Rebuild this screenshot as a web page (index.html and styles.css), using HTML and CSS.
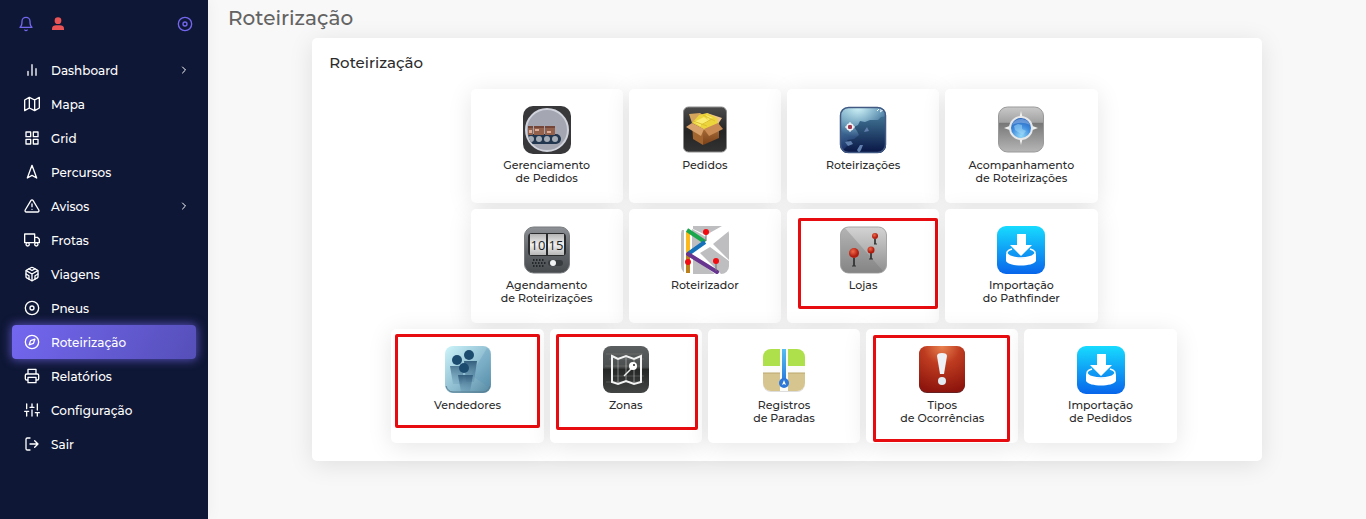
FILE: index.html
```
<!DOCTYPE html>
<html lang="pt-BR">
<head>
    <meta charset="UTF-8">
    <meta name="viewport" content="width=device-width, initial-scale=1.0">
    <title>Roteirização</title>
    <link rel="stylesheet" href="styles.css">
</head>
<body>

    <!-- Sidebar -->
    <aside class="sidebar">
        <div class="sidebar-top">
            <button type="button" class="icon-btn" aria-label="Notificações">
                <svg class="icon" viewBox="0 0 24 24"><path d="M18 8A6 6 0 0 0 6 8c0 7-3 9-3 9h18s-3-2-3-9"/><path d="M13.73 21a2 2 0 0 1-3.46 0"/></svg>
            </button>
            <button type="button" class="icon-btn user-btn" aria-label="Usuário">
                <svg viewBox="0 0 24 24" width="16" height="16"><circle cx="12" cy="7" r="5"/><path d="M3 21v-2c0-3.500 3-5 6-5h6c3 0 6 1.500 6 5v2z"/></svg>
            </button>
            <button type="button" class="icon-btn pin-btn" aria-label="Fixar menu">
                <svg class="icon" viewBox="0 0 24 24"><circle cx="12" cy="12" r="10"/><circle cx="12" cy="12" r="3"/></svg>
            </button>
        </div>

        <nav class="menu">
            <a href="#" class="menu-item">
                <svg class="icon" viewBox="0 0 24 24"><path d="M18 20V10M12 20V4M6 20v-6"/></svg>
                <span>Dashboard</span>
                <svg class="icon arrow" viewBox="0 0 24 24"><path d="M9 18l6-6-6-6"/></svg>
            </a>
            <a href="#" class="menu-item">
                <svg class="icon" viewBox="0 0 24 24"><path d="M1 6v16l7-4 8 4 7-4V2l-7 4-8-4-7 4zM8 2v16M16 6v16"/></svg>
                <span>Mapa</span>
            </a>
            <a href="#" class="menu-item">
                <svg class="icon" viewBox="0 0 24 24"><path d="M3 3h7v7H3zM14 3h7v7h-7zM14 14h7v7h-7zM3 14h7v7H3z"/></svg>
                <span>Grid</span>
            </a>
            <a href="#" class="menu-item">
                <svg class="icon" viewBox="0 0 24 24"><path d="M12 2l7 19-7-4-7 4z"/></svg>
                <span>Percursos</span>
            </a>
            <a href="#" class="menu-item">
                <svg class="icon" viewBox="0 0 24 24"><path d="M10.290 3.860L1.820 18a2 2 0 0 0 1.710 3h16.940a2 2 0 0 0 1.710-3L13.710 3.860a2 2 0 0 0-3.420 0zM12 9v4M12 17h.01"/></svg>
                <span>Avisos</span>
                <svg class="icon arrow" viewBox="0 0 24 24"><path d="M9 18l6-6-6-6"/></svg>
            </a>
            <a href="#" class="menu-item">
                <svg class="icon" viewBox="0 0 24 24"><path d="M1 3h15v13H1zM16 8h4l3 3v5h-7z"/><circle cx="5.500" cy="18.500" r="2.500"/><circle cx="18.500" cy="18.500" r="2.500"/></svg>
                <span>Frotas</span>
            </a>
            <a href="#" class="menu-item">
                <svg class="icon" viewBox="0 0 24 24"><path d="M21 16V8a2 2 0 0 0-1-1.730l-7-4a2 2 0 0 0-2 0l-7 4A2 2 0 0 0 3 8v8a2 2 0 0 0 1 1.730l7 4a2 2 0 0 0 2 0l7-4A2 2 0 0 0 21 16z"/><path d="M7.500 4.210L12 6.810l4.500-2.600M7.500 19.790V14.600L3 12M21 12l-4.500 2.600v5.190M3.270 6.960L12 12.010l8.730-5.050M12 22.080V12"/></svg>
                <span>Viagens</span>
            </a>
            <a href="#" class="menu-item">
                <svg class="icon" viewBox="0 0 24 24"><circle cx="12" cy="12" r="10"/><circle cx="12" cy="12" r="3"/></svg>
                <span>Pneus</span>
            </a>
            <a href="#" class="menu-item active">
                <svg class="icon" viewBox="0 0 24 24"><circle cx="12" cy="12" r="10"/><path d="M16.240 7.760l-2.120 6.360-6.360 2.120 2.120-6.360z"/></svg>
                <span>Roteirização</span>
            </a>
            <a href="#" class="menu-item">
                <svg class="icon" viewBox="0 0 24 24"><path d="M6 9V2h12v7M6 18H4a2 2 0 0 1-2-2v-5a2 2 0 0 1 2-2h16a2 2 0 0 1 2 2v5a2 2 0 0 1-2 2h-2M6 14h12v8H6z"/></svg>
                <span>Relatórios</span>
            </a>
            <a href="#" class="menu-item">
                <svg class="icon" viewBox="0 0 24 24"><path d="M4 21v-7M4 10V3M12 21v-9M12 8V3M20 21v-5M20 12V3M1 14h6M9 8h6M17 16h6"/></svg>
                <span>Configuração</span>
            </a>
            <a href="#" class="menu-item">
                <svg class="icon" viewBox="0 0 24 24"><path d="M9 21H5a2 2 0 0 1-2-2V5a2 2 0 0 1 2-2h4M16 17l5-5-5-5M21 12H9"/></svg>
                <span>Sair</span>
            </a>
        </nav>
    </aside>

    <!-- Content -->
    <main class="content">
        <h1>Roteirização</h1>

        <section class="card">
            <h2>Roteirização</h2>

            <div class="tile-row">
                <a href="#" class="tile">
                    <svg class="tile-icon" viewBox="0 0 48 48">
                        <defs><clipPath id="beltClip"><circle cx="24" cy="24" r="20"/></clipPath></defs>
                        <rect width="48" height="48" rx="10" fill="#38373a"/>
                        <circle cx="24" cy="24" r="21" fill="#a4a7b2" stroke="#d0d3dc" stroke-width="2"/>
                        <g clip-path="url(#beltClip)">
                            <path d="M5 28h28a5 5 0 0 1 0 10H7z" fill="#22364f"/>
                            <path d="M5 20h5v9H5zM11 20h10v9H11zM22 20h10v9H22z" fill="#93604b"/>
                            <path d="M11 20h10v2H11zM22 20h10v2H22zM5 20h5v2H5z" fill="#754638"/>
                            <path d="M12 23h4v2h-4zM24 25h4v2h-4zM6 24h3v3H6z" fill="#dcae9a"/>
                            <g fill="#a4abb5"><circle cx="8" cy="33" r="3"/><circle cx="16" cy="33" r="3"/><circle cx="24" cy="33" r="3"/><circle cx="32" cy="33" r="3"/></g>
                        </g>
                    </svg>
                    <span>Gerenciamento<br>de Pedidos</span>
                </a>
                <a href="#" class="tile">
                    <svg class="tile-icon" viewBox="0 0 48 48">
                        <defs>
                            <linearGradient id="boxBg" x2="0" y2="1"><stop stop-color="#4b4b4b"/><stop offset=".55" stop-color="#242424"/><stop offset="1" stop-color="#333"/></linearGradient>
                            <linearGradient id="boxSide" x2="0" y2="1"><stop stop-color="#b67a42"/><stop offset="1" stop-color="#7a4018"/></linearGradient>
                        </defs>
                        <rect x="2.500" y="1" width="43" height="45" rx="5" fill="url(#boxBg)" stroke="#8d8d8d"/>
                        <path d="M11 18l11 5v16l-10-6z" fill="#a2652f"/>
                        <path d="M22 23l16-6v15l-16 7z" fill="url(#boxSide)"/>
                        <path d="M8 8l11-1 6 4-14 6z" fill="#d6a55c"/>
                        <path d="M26 7l15 5-4 6-12-7z" fill="#efc38f"/>
                        <path d="M11 17l7-8 8-2 10 5 1 6-13 6z" fill="#ecd43c"/>
                        <path d="M13 16l10-5 5 4-9 5zM25 9l7 3-5 2z" fill="#f9ec70"/>
                        <path d="M12 15l14 5M22 9l12 6M20 19l11-6" stroke="#dcc12e" fill="none"/>
                        <path d="M11 17l12 6-3 7-15-9z" fill="#d8a06a"/>
                        <path d="M23 23l14-6 5 6-14 7z" fill="#c98a54"/>
                    </svg>
                    <span>Pedidos</span>
                </a>
                <a href="#" class="tile">
                    <svg class="tile-icon" viewBox="0 0 48 48">
                        <defs>
                            <linearGradient id="seaBg" x2=".3" y2="1"><stop stop-color="#82b1c8"/><stop offset=".4" stop-color="#4a7ca2"/><stop offset="1" stop-color="#101f5b"/></linearGradient>
                            <radialGradient id="seaGlow" cx=".4" cy="0" r=".65"><stop stop-color="#d6f7fc"/><stop offset="1" stop-color="#a3d6e4" stop-opacity="0"/></radialGradient>
                            <linearGradient id="seaDark" x2="0" y2="1"><stop stop-color="#3f7293"/><stop offset="1" stop-color="#071342"/></linearGradient>
                            <clipPath id="seaClip"><rect x="1" y="1" width="46" height="46" rx="8"/></clipPath>
                        </defs>
                        <g clip-path="url(#seaClip)">
                            <path d="M0 0h48v48H0z" fill="url(#seaBg)"/>
                            <path d="M0 0h48v48H0z" fill="url(#seaGlow)"/>
                            <path d="M48 10l-6 1-3 3-8 0-5 2-5-1-2 4-4 2 3 4 2 4-5 4-7 1 2 4-5 5-1 5h44z" fill="url(#seaDark)"/>
                            <path d="M26 24l2-3 2 4-5 1zM18 44l3-5 3 0-2 5-2 3zM6 36l6-1 2 3-5 2z" fill="#617fac"/>
                            <path d="M38 5l2-2M41 6l3-2M42 3v2" stroke="#f0fbff"/>
                        </g>
                        <rect x="1.500" y="1.500" width="45" height="45" rx="8" fill="none" stroke="#415983" stroke-width="1.500"/>
                        <circle cx="11" cy="21" r="3" fill="#9f3b51" stroke="#eef2f6" stroke-width="1.500"/>
                        <path d="M11 16v3M11 23v3M6 21h3M13 21h3" stroke="#fff"/>
                    </svg>
                    <span>Roteirizações</span>
                </a>
                <a href="#" class="tile">
                    <svg class="tile-icon" viewBox="0 0 48 48">
                        <defs>
                            <linearGradient id="grayBg" x2="0" y2="1"><stop stop-color="#c9c9c9"/><stop offset=".34" stop-color="#a2a2a2"/><stop offset=".36" stop-color="#777"/><stop offset="1" stop-color="#b6b6b6"/></linearGradient>
                            <radialGradient id="globe" cx=".5" cy=".85" r=".9"><stop stop-color="#91d8f8"/><stop offset=".5" stop-color="#3f8bdd"/><stop offset="1" stop-color="#2056ac"/></radialGradient>
                        </defs>
                        <rect x="1.500" y="1" width="45" height="45" rx="9" fill="url(#grayBg)" stroke="#999"/>
                        <path d="M24 5l3 12 14 5-14 5-3 12-3-12-14-5 14-5z" fill="#f1f1ef"/>
                        <circle cx="24" cy="22" r="11" fill="url(#globe)" stroke="#e7e8e9" stroke-width="2"/>
                        <path d="M17 20l4-2 4 1 0 4 4 2-3 4-5-3-3-2z" fill="#a5ddfa" opacity=".5"/>
                        <path d="M15 19c2-8 16-8 18 0-6-3-12-3-18 0z" fill="#b8d2f5" opacity=".4"/>
                    </svg>
                    <span>Acompanhamento<br>de Roteirizações</span>
                </a>
            </div>

            <div class="tile-row">
                <a href="#" class="tile">
                    <svg class="tile-icon" viewBox="0 0 48 48">
                        <defs>
                            <linearGradient id="clockBg" x2="0" y2="1"><stop stop-color="#8e9296"/><stop offset=".5" stop-color="#63676b"/><stop offset="1" stop-color="#484b4e"/></linearGradient>
                            <linearGradient id="flap" x2="0" y2="1"><stop stop-color="#b4b4b4"/><stop offset=".5" stop-color="#f0f0f0"/><stop offset="1" stop-color="#b8b8b8"/></linearGradient>
                        </defs>
                        <rect x="1.500" y="1" width="45" height="46" rx="9" fill="url(#clockBg)" stroke="#777b7e"/>
                        <rect x="5" y="7" width="38" height="23" rx="4" fill="#292b2d"/>
                        <path d="M7 8h16v21H7zM25 8h16v21H25z" fill="url(#flap)"/>
                        <g class="clock-digits"><text x="15" y="24">10</text><text x="33" y="24">15</text></g>
                        <path d="M10 34h12M9 37h14M10 40h12" stroke="#24272a" stroke-width="2" stroke-dasharray="1.500 1.500"/>
                        <rect x="25" y="34" width="15" height="6" rx="3" fill="#393c3f"/>
                        <circle cx="30" cy="37" r="3" fill="#f0f2f3"/>
                    </svg>
                    <span>Agendamento<br>de Roteirizações</span>
                </a>
                <a href="#" class="tile">
                    <svg class="tile-icon" viewBox="0 0 48 48">
                        <defs><clipPath id="routeClip"><rect width="48" height="48" rx="8"/></clipPath></defs>
                        <g clip-path="url(#routeClip)">
                            <path d="M0 4h3v44H0zM12 0h29L25 9 12 3zM48 5v29L32 18zM12 32l22 16H12zM29 21l19 14v13h-8L19 27z" fill="#bebec0"/>
                            <path d="M11 3l14 8v4L11 24z" fill="#bebec0"/>
                        </g>
                        <g fill="none" stroke-width="4" stroke-linejoin="round">
                            <path d="M7 6v22" stroke="#fbb91d"/>
                            <path d="M7 28v19" stroke="#b9801d"/>
                            <path d="M6 4l18 12" stroke="#1aa64b"/>
                            <path d="M24 16L7 28" stroke="#1370b9"/>
                            <path d="M7 28l29 18" stroke="#67358f" stroke-linecap="round"/>
                        </g>
                        <path d="M25 6v9M35 36v9" stroke="#776b73"/>
                        <g fill="#f30b12"><circle cx="25" cy="6" r="3"/><circle cx="7" cy="36" r="3"/><circle cx="35" cy="35" r="3"/></g>
                    </svg>
                    <span>Roteirizador</span>
                </a>
                <a href="#" class="tile">
                    <svg class="tile-icon" viewBox="0 0 48 48">
                        <defs>
                            <linearGradient id="stone" x2="0" y2="1"><stop stop-color="#d4d4d4"/><stop offset="1" stop-color="#8f8f8f"/></linearGradient>
                            <radialGradient id="pinRed" cx=".4" cy=".35"><stop stop-color="#f06a4a"/><stop offset="1" stop-color="#b01c0e"/></radialGradient>
                        </defs>
                        <rect x="1.500" y="1" width="46" height="46" rx="8" fill="url(#stone)" stroke="#a5a5a5"/>
                        <path d="M2 9a8 8 0 0 1 4-7l38 43q-3 2-6 2H10a8 8 0 0 1-8-8z" fill="#6d6d6d" opacity=".3"/>
                        <path d="M15 32v8M32 27v6M36 13v5" stroke="#222" stroke-width="1.500"/>
                        <path d="M13 40h4M30 33h4M35 18h3" stroke="#333"/>
                        <g fill="url(#pinRed)"><circle cx="15" cy="27" r="5"/><circle cx="32" cy="24" r="3.500"/><circle cx="36" cy="10" r="3"/></g>
                    </svg>
                    <span>Lojas</span>
                    <i class="mark mark-lojas"></i>
                </a>
                <a href="#" class="tile">
                    <svg class="tile-icon" viewBox="0 0 48 48">
                        <defs><linearGradient id="importBg" x2="0" y2="1"><stop stop-color="#17dbff"/><stop offset="1" stop-color="#0865eb"/></linearGradient></defs>
                        <rect width="48" height="48" rx="9" fill="url(#importBg)"/>
                        <path d="M20 8h9v11h6L24 30 13 19h7z" fill="#fff"/>
                        <path d="M15 23c-10 3-4 9 9 9s19-6 9-9" fill="none" stroke="#fff" stroke-width="1.500"/>
                        <path d="M9 27c3 7 27 7 30 0v8c-3 6-27 6-30 0z" fill="#fff"/>
                    </svg>
                    <span>Importação<br>do Pathfinder</span>
                </a>
            </div>

            <div class="tile-row">
                <a href="#" class="tile">
                    <svg class="tile-icon" viewBox="0 0 48 48">
                        <defs>
                            <linearGradient id="blueBg" x2="1" y2="1"><stop stop-color="#cdf5fb"/><stop offset=".6" stop-color="#88b7cc"/><stop offset="1" stop-color="#5488a1"/></linearGradient>
                            <linearGradient id="bodyBlue" x2="0" y2="1"><stop stop-color="#345e7d"/><stop offset="1" stop-color="#5686a4" stop-opacity=".2"/></linearGradient>
                        </defs>
                        <rect x="1" y="0" width="46" height="47" rx="8" fill="url(#blueBg)"/>
                        <path d="M2 40q2 6 7 6h30q5 0 7-6" fill="none" stroke="#587b8c"/>
                        <path d="M27 29l19 13V8q0-4-3-6z" fill="#4f91b5" opacity=".25"/>
                        <path d="M20 15h13l-3 21h-8zM6 20h14l-2 18H9z" fill="url(#bodyBlue)"/>
                        <path d="M14 29h15l-3 17h-9z" fill="url(#bodyBlue)"/>
                        <g fill="#1c4b70"><circle cx="25" cy="9" r="5"/><circle cx="13" cy="14" r="5"/><circle cx="20" cy="22" r="5"/></g>
                    </svg>
                    <span>Vendedores</span>
                    <i class="mark mark-vendedores"></i>
                </a>
                <a href="#" class="tile">
                    <svg class="tile-icon" viewBox="0 0 48 48">
                        <defs><linearGradient id="mapBg" x2="0" y2="1"><stop stop-color="#5c5f5f"/><stop offset=".45" stop-color="#4b4e4e"/><stop offset=".5" stop-color="#252727"/><stop offset="1" stop-color="#434545"/></linearGradient></defs>
                        <rect x="1" y="0" width="46" height="47" rx="8" fill="url(#mapBg)"/>
                        <path d="M4 8h37M7 13h35M3 20h36M9 30h33M4 36h38" stroke="#888" opacity=".4"/>
                        <path d="M10 10l6 3 8-3 8 3 7-3v26l-7 2-8-3-8 3-6-2z" fill="none" stroke="#f3f3f3" stroke-width="2"/>
                        <path d="M16 13v24M24 10v25M32 13v24" stroke="#ddd" opacity=".5"/>
                        <path d="M30 22l-8 8" stroke="#eee" stroke-width="1.500"/>
                        <circle cx="31" cy="20" r="4" fill="#fff"/><circle cx="32" cy="19" r="1" fill="#222"/>
                    </svg>
                    <span>Zonas</span>
                    <i class="mark mark-zonas"></i>
                </a>
                <a href="#" class="tile">
                    <svg class="tile-icon" viewBox="0 0 48 48">
                        <defs>
                            <clipPath id="stopClip"><rect x="3" y="3" width="42" height="42" rx="8"/></clipPath>
                            <linearGradient id="stopLine" x2="0" y2="1"><stop stop-color="#55bdf0"/><stop offset="1" stop-color="#2b7ddd"/></linearGradient>
                        </defs>
                        <rect x="3" y="4" width="42" height="42" rx="8" fill="#ddd"/>
                        <g clip-path="url(#stopClip)">
                            <path d="M3 3h42v42H3z" fill="#fbfbf9"/>
                            <path d="M3 3h17v17H3zM28 3h17v17H28z" fill="#aee04b"/>
                            <path d="M3 27h17v18H3zM28 27h17v18H28z" fill="#d7c58f"/>
                            <path d="M3 27h17M28 27h17" stroke="#bba86f"/>
                        </g>
                        <path d="M22 3h4v32h-4z" fill="url(#stopLine)"/>
                        <circle cx="24" cy="37" r="5" fill="#2d78d9"/>
                        <path d="M24 34l2 5-2-1-2 1z" fill="#fff"/>
                    </svg>
                    <span>Registros<br>de Paradas</span>
                </a>
                <a href="#" class="tile">
                    <svg class="tile-icon" viewBox="0 0 48 48">
                        <defs><radialGradient id="alertBg" cx=".5" cy="0" r="1"><stop stop-color="#e98351"/><stop offset=".4" stop-color="#be3c20"/><stop offset="1" stop-color="#8e150d"/></radialGradient></defs>
                        <rect x="1" y="1" width="46" height="46" rx="8" fill="#622"/>
                        <rect x="1" y="0" width="46" height="46" rx="8" fill="url(#alertBg)"/>
                        <path d="M19 10q0-3 5-3t5 3l-3 18h-4z" fill="#eef1f5"/>
                        <circle cx="24" cy="35" r="4" fill="#e1e9f1"/>
                    </svg>
                    <span>Tipos<br>de Ocorrências</span>
                    <i class="mark mark-tipos"></i>
                </a>
                <a href="#" class="tile">
                    <svg class="tile-icon" viewBox="0 0 48 48">
                        <rect width="48" height="48" rx="9" fill="url(#importBg)"/>
                        <path d="M20 8h9v11h6L24 30 13 19h7z" fill="#fff"/>
                        <path d="M15 23c-10 3-4 9 9 9s19-6 9-9" fill="none" stroke="#fff" stroke-width="1.500"/>
                        <path d="M9 27c3 7 27 7 30 0v8c-3 6-27 6-30 0z" fill="#fff"/>
                    </svg>
                    <span>Importação<br>de Pedidos</span>
                </a>
            </div>
        </section>
    </main>

</body>
</html>
```

FILE: styles.css
```
* {
    box-sizing: border-box;
}
body {
    margin: 0;
    min-height: 100vh;
    display: flex;
    font-family: Montserrat, Inter, sans-serif;
    font-weight: 500;
    background-color: #f8f8f8;
    color: #2c2c2c;
}
a {
    color: inherit;
    text-decoration: none;
}

/* Sidebar */
.sidebar {
    flex: 0 0 208px;
    background-color: #0f1736;
    color: #fff;
    box-shadow: 0 0 15px rgba(0, 0, 0, 0.05);
}
.sidebar-top {
    display: flex;
    gap: 16px;
    padding: 16px 15px 0 18px;
}
.icon-btn {
    display: flex;
    padding: 0;
    border: none;
    background: none;
    color: #7367f0;
    cursor: pointer;
}
.user-btn {
    fill: #ea5455;
}
.pin-btn {
    margin-left: auto;
}
.icon {
    width: 16px;
    height: 16px;
    fill: none;
    stroke: currentColor;
    stroke-width: 2;
    stroke-linecap: round;
    stroke-linejoin: round;
}
.menu {
    padding: 21px 12px;
}
.menu-item {
    display: flex;
    align-items: center;
    gap: 11px;
    height: 34px;
    padding: 0 6px 0 12px;
    border-radius: 4px;
    font-size: 12px;
}
.menu-item.active {
    background: linear-gradient(118deg, #7367f0, rgba(115, 103, 240, 0.7));
    box-shadow: 0 0 10px 1px rgba(115, 103, 240, 0.7);
}
.arrow {
    width: 12px;
    height: 12px;
    margin-left: auto;
}

/* Content */
.content {
    flex: 1;
}
h1 {
    margin: 0;
    padding: 6px 20px 8px;
    font-size: 20px;
    line-height: 24px;
    font-weight: 500;
    color: #636363;
}
.card {
    margin: 0 9% 24px;
    padding-bottom: 18px;
    background-color: #fff;
    border-radius: 5px;
    box-shadow: 0 4px 25px rgba(0, 0, 0, 0.1);
}
h2 {
    margin: 0;
    padding: 15px 17px 16px;
    font-size: 15px;
    line-height: 20px;
    font-weight: 500;
}
.tile-row {
    display: flex;
    justify-content: center;
    gap: 6px;
    margin: 0 6px 6px 0;
}
.tile {
    position: relative;
    flex: 0 0 calc(100% / 6 - 5px);
    min-height: 114px;
    padding-top: 17px;
    text-align: center;
    font-size: 11px;
    line-height: 13px;
    background-color: #fff;
    border-radius: 5px;
    box-shadow: 0 4px 25px rgba(0, 0, 0, 0.1);
}
.tile-row:last-child {
    margin-bottom: 0;
}
.tile-icon {
    display: block;
    width: 48px;
    height: 48px;
    margin: 0 auto 5px;
}
.clock-digits {
    font-family: "Open Sans", sans-serif;
    font-size: 13px;
    text-anchor: middle;
    fill: #222;
}

/* Red highlight boxes over the tiles */
.mark {
    position: absolute;
    border: 3px solid #e60c0f;
    border-radius: 2px;
}
.mark-lojas {
    inset: 9px 1px 14px 11px;
}
.mark-vendedores {
    inset: 5px 4px 15px 4px;
}
.mark-zonas {
    inset: 5px 4px 13px 6px;
}
.mark-tipos {
    inset: 6px 8px 1px 7px;
}
```
